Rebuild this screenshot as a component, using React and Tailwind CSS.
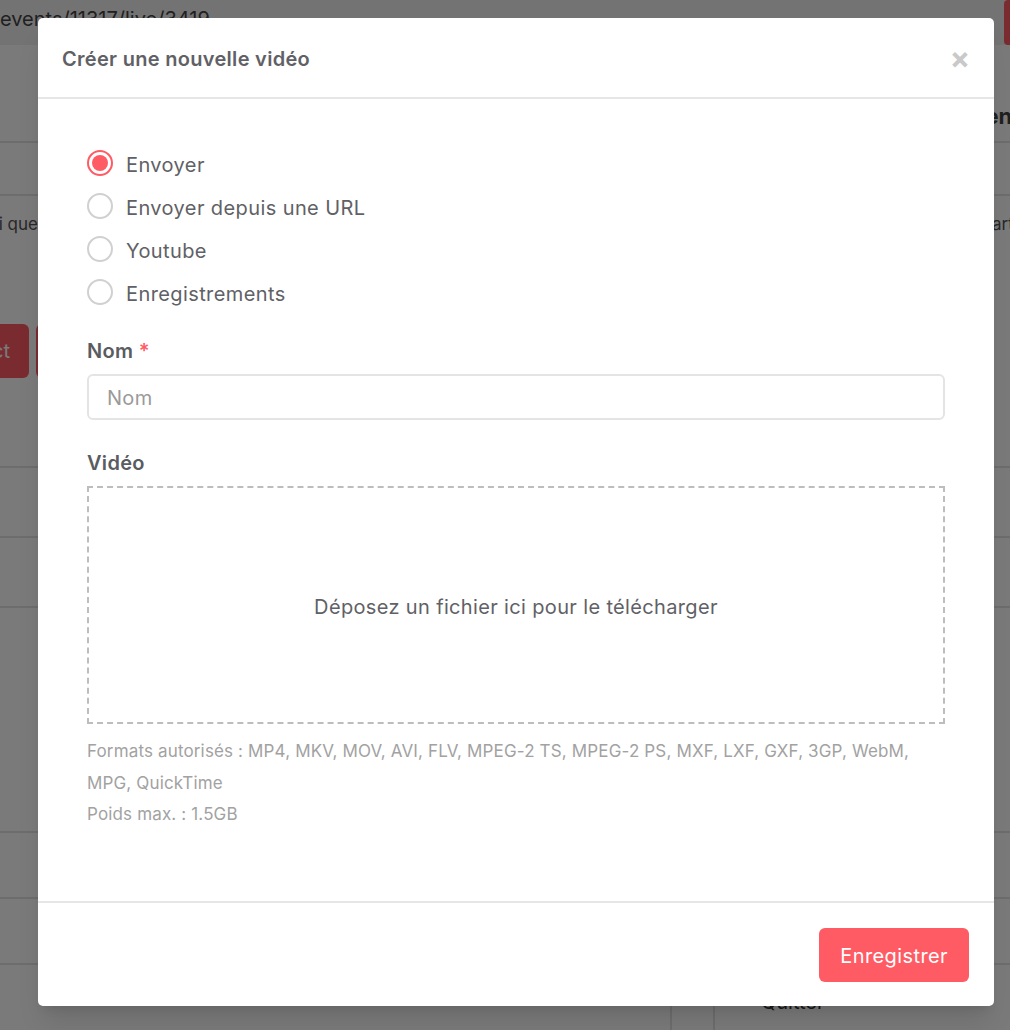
import React, { useState } from 'react';

const FONT = { fontFamily: 'Inter, "Open Sans", sans-serif' };

const SOURCES = ['Envoyer', 'Envoyer depuis une URL', 'Youtube', 'Enregistrements'];

function Radio({ checked, label, onClick }) {
  return (
    <button type="button" onClick={onClick} className="flex h-[43px] items-center gap-[13px] text-left">
      {checked ? (
        <span className="flex h-[26px] w-[26px] items-center justify-center rounded-full border-2 border-[#ff5b64] bg-white">
          <span className="h-[16px] w-[16px] rounded-full bg-[#ff5b64]" />
        </span>
      ) : (
        <span className="h-[26px] w-[26px] rounded-full border-2 border-[#d0d0d0] bg-white" />
      )}
      <span className="pt-[5px] text-[20px] tracking-[0.4px] text-[#5f6166]">{label}</span>
    </button>
  );
}

// page that sits behind the dialog
function Backdrop() {
  return (
    <div className="h-[1030px] w-[1010px] overflow-hidden bg-white text-[#333]">
      <div className="flex h-[45px] items-center justify-between bg-[#f0f0f0] pb-[8px]">
        <span className="text-[20px] text-[#444]">events/11317/live/3419</span>
        <span className="mt-[8px] h-[45px] w-[6px] rounded-l bg-[#ff5b64]" />
      </div>
      <div className="flex h-[98px] items-end justify-end border-b-2 border-[#e4e4e4] pb-[8px]">
        <span className="-mr-[16px] text-[22px] font-bold text-[#444]">Contenu</span>
      </div>
      <div className="h-[53px] border-b-2 border-[#e4e4e4]" />
      <div className="h-[272px] border-b-2 border-[#e4e4e4] pt-[16px]">
        <div className="flex justify-between text-[17px] text-[#555]">
          <span className="-ml-[34px]">ainsi que le lien</span>
          <span className="-mr-[92px]">Partager le lien</span>
        </div>
        <div className="mt-[86px] flex gap-[7px]">
          <span className="-ml-[72px] flex h-[54px] w-[101px] items-center justify-end rounded-md bg-[#ff5b64] pr-[19px] text-[20px] text-white">Direct</span>
          <span className="h-[54px] w-[80px] rounded-md bg-[#ff5b64]" />
        </div>
      </div>
      <div className="h-[70px] border-b-2 border-[#e4e4e4]" />
      <div className="h-[70px] border-b-2 border-[#e4e4e4]" />
      <div className="h-[225px] border-b-2 border-[#e4e4e4]" />
      <div className="h-[66px] border-b-2 border-[#e4e4e4]" />
      <div className="h-[66px] border-b-2 border-[#e4e4e4]" />
      <div className="flex h-[65px]">
        <div className="w-[670px]" />
        <div className="mt-[10px] w-[43px] border-l-2 border-[#e4e4e4]" />
        <div className="mt-[10px] flex items-start gap-[10px] border-l-2 border-[#e4e4e4] pl-[18px] pt-[12px] text-[20px] text-[#333]">
          <svg width="18" height="22" viewBox="0 0 24 24" fill="none" stroke="#333" strokeWidth="3.5" strokeLinecap="round">
            <path d="M8 4c5 3 7 6 7 8s-2 5-7 8" />
          </svg>
          Quitter
        </div>
      </div>
    </div>
  );
}

export default function App() {
  const [source, setSource] = useState(0);

  return (
    <div className="relative h-[1030px] w-[1010px] overflow-hidden" style={FONT}>
      <Backdrop />
      <div className="absolute inset-0 bg-black/[0.52]" />

      <div className="absolute left-[38px] top-[18px] flex h-[988px] w-[956px] flex-col rounded-[5px] bg-white shadow-xl">
        <div className="flex h-[81px] shrink-0 items-center justify-between border-b-2 border-[#e6e6e6] pl-[24px] pr-[24px] pt-[3px]">
          <h2 className="text-[20px] font-semibold tracking-[0.3px] text-[#5f6166]">Créer une nouvelle vidéo</h2>
          <button type="button" className="-mt-[2px] text-[30px] font-bold leading-none text-[#c9c9c9]">×</button>
        </div>

        <div className="flex-1 px-[49px] pt-[42px]">
          <div className="flex flex-col items-start">
            {SOURCES.map((s, i) => (
              <Radio key={s} label={s} checked={source === i} onClick={() => setSource(i)} />
            ))}
          </div>

          <label className="mt-[26px] mb-[11px] block text-[20px] font-semibold leading-[24px] tracking-[0.3px] text-[#5a5c61]">
            Nom <span className="text-[#ff5b64]">*</span>
          </label>
          <input
            type="text"
            placeholder="Nom"
            className="h-[46px] w-full rounded-md border-2 border-[#e4e4e4] px-[18px] pt-[2px] text-[20px] tracking-[0.3px] text-[#555] placeholder:text-[#9a9a9a] focus:outline-none"
          />

          <label className="mt-[31px] mb-[11px] block text-[20px] font-semibold leading-[24px] tracking-[0.3px] text-[#5a5c61]">Vidéo</label>
          <div className="flex h-[238px] items-center justify-center border-2 border-dashed border-[#bdbdbd] pt-[4px] text-[20px] tracking-[0.35px] text-[#5f6166]">
            Déposez un fichier ici pour le télécharger
          </div>

          <div className="mt-[12px] text-[17px] leading-[31.5px] tracking-[0.15px] text-[#a2a2a2]">
            <p>Formats autorisés : MP4, MKV, MOV, AVI, FLV, MPEG-2 TS, MPEG-2 PS, MXF, LXF, GXF, 3GP, WebM, MPG, QuickTime</p>
            <p>Poids max. : 1.5GB</p>
          </div>
        </div>

        <div className="flex h-[105px] shrink-0 items-center justify-end border-t-2 border-[#e6e6e6] pr-[25px]">
          <button type="button" className="h-[54px] rounded-md bg-[#ff5b64] px-[21px] pt-[2px] text-[20px] tracking-[0.4px] text-white">
            Enregistrer
          </button>
        </div>
      </div>
    </div>
  );
}
